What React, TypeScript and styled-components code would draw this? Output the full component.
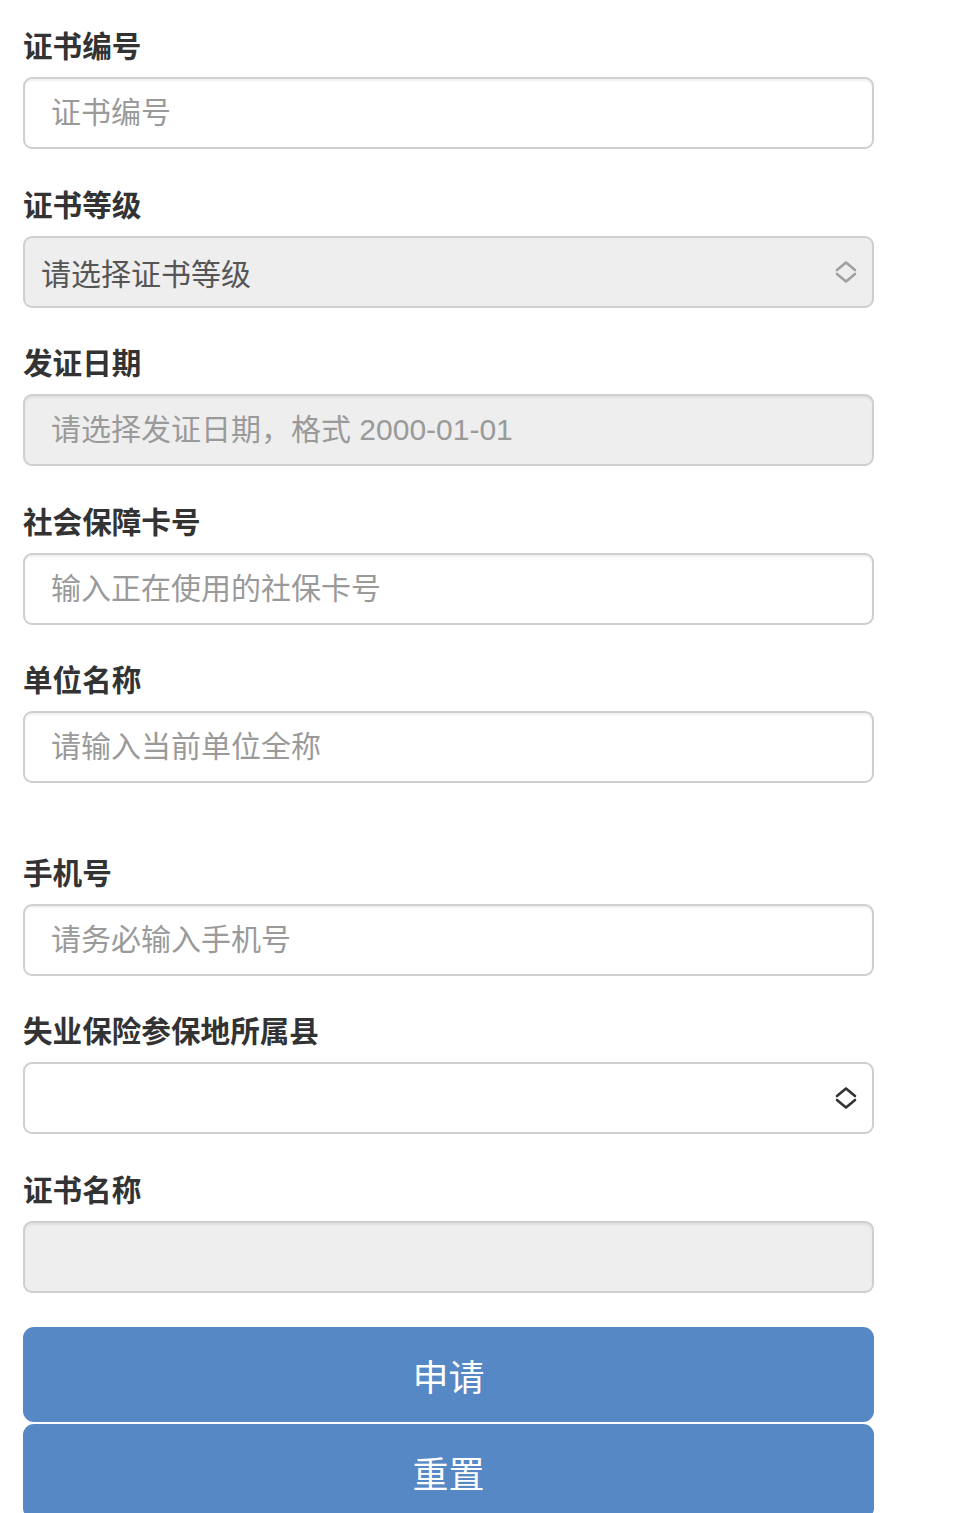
import styled, { createGlobalStyle } from 'styled-components';

const GlobalStyle = createGlobalStyle`
  html, body {
    margin: 0;
    padding: 0;
    background: #fff;
  }
  body {
    font-family: "Liberation Sans", "Noto Sans CJK SC", sans-serif;
  }
`;

const Formulario = styled.form`
  width: 851px;
  margin-left: 23px;
  padding-top: 25px;
  box-sizing: border-box;
`;

const Campo = styled.div`
  margin-bottom: 34.5px;
`;

const Rotulo = styled.label`
  display: block;
  height: 44px;
  line-height: 44px;
  margin-bottom: 8px;
  font-size: 29.6px;
  font-weight: 700;
  color: #333;
  white-space: nowrap;
`;

const Entrada = styled.input<{ $cinza?: boolean }>`
  display: block;
  width: 100%;
  height: 72px;
  box-sizing: border-box;
  padding: 0 26px;
  border: 2px solid #cfcfcf;
  border-radius: 9px;
  background: ${(props) => (props.$cinza ? '#eeeeee' : '#ffffff')};
  box-shadow: inset 0 2px 2px rgba(0, 0, 0, 0.06);
  font-family: "Liberation Sans", "Noto Sans CJK SC", sans-serif;
  font-size: 30px;
  color: #555;
  outline: none;

  &::placeholder {
    color: #9a9a9a;
    opacity: 1;
  }
`;

const Seletor = styled.div<{ $cinza?: boolean }>`
  display: flex;
  align-items: center;
  justify-content: space-between;
  height: 72px;
  box-sizing: border-box;
  padding: 0 14px 0 16px;
  border: 2px solid #cfcfcf;
  border-radius: 9px;
  background: ${(props) => (props.$cinza ? '#eeeeee' : '#ffffff')};
  font-size: 30px;
  color: #555;
`;

const Espaco = styled.div`
  height: 34px;
`;

const Botao = styled.button`
  display: block;
  width: 100%;
  height: 95px;
  margin-bottom: 2px;
  border: none;
  border-radius: 11px;
  background: #5588c4;
  color: #fff;
  font-family: "Liberation Sans", "Noto Sans CJK SC", sans-serif;
  font-size: 36px;
  cursor: pointer;
`;

function Seta({ cor }: { cor: string }) {
  return (
    <svg width="24" height="24" viewBox="0 0 24 24" fill="none">
      <path d="M3 10 L12 2.5 L21 10" stroke={cor} strokeWidth="2.6" strokeLinecap="round" strokeLinejoin="round" />
      <path d="M3 14 L12 21.5 L21 14" stroke={cor} strokeWidth="2.6" strokeLinecap="round" strokeLinejoin="round" />
    </svg>
  );
}

export default function App() {
  return (
    <>
      <GlobalStyle />
      <Formulario onSubmit={(e) => e.preventDefault()}>
        <Campo>
          <Rotulo>证书编号</Rotulo>
          <Entrada placeholder="证书编号" />
        </Campo>
        <Campo>
          <Rotulo>证书等级</Rotulo>
          <Seletor $cinza>
            <span>请选择证书等级</span>
            <Seta cor="#a0a0a0" />
          </Seletor>
        </Campo>
        <Campo>
          <Rotulo>发证日期</Rotulo>
          <Entrada $cinza disabled placeholder="请选择发证日期，格式 2000-01-01" />
        </Campo>
        <Campo>
          <Rotulo>社会保障卡号</Rotulo>
          <Entrada placeholder="输入正在使用的社保卡号" />
        </Campo>
        <Campo>
          <Rotulo>单位名称</Rotulo>
          <Entrada placeholder="请输入当前单位全称" />
        </Campo>
        <Espaco />
        <Campo>
          <Rotulo>手机号</Rotulo>
          <Entrada placeholder="请务必输入手机号" />
        </Campo>
        <Campo>
          <Rotulo>失业保险参保地所属县</Rotulo>
          <Seletor>
            <span />
            <Seta cor="#333" />
          </Seletor>
        </Campo>
        <Campo>
          <Rotulo>证书名称</Rotulo>
          <Entrada $cinza disabled />
        </Campo>
        <Botao type="submit">申请</Botao>
        <Botao type="reset">重置</Botao>
      </Formulario>
    </>
  );
}
